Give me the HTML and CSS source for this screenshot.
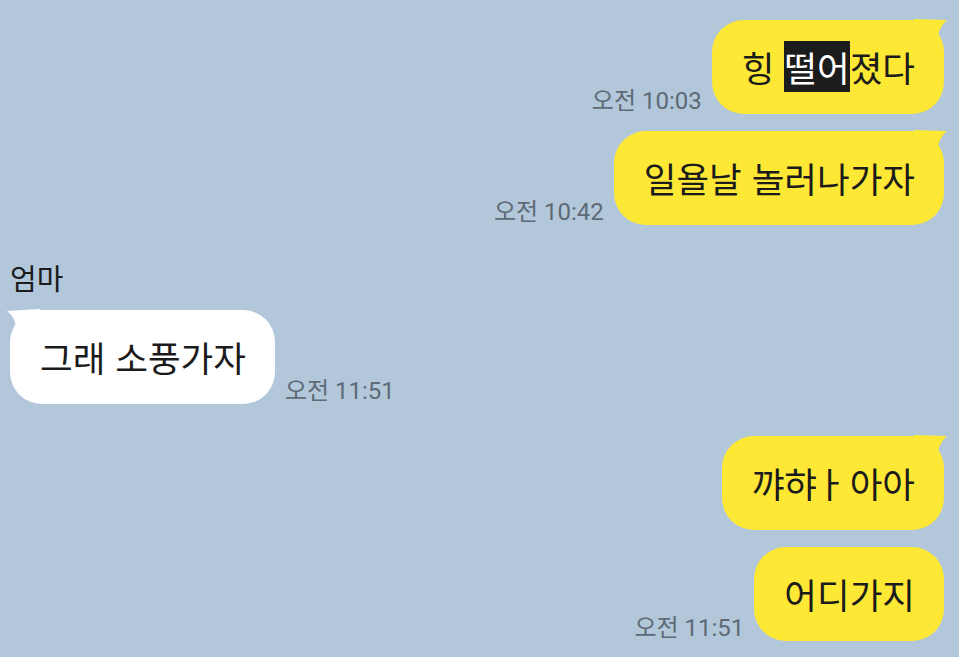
FILE: index.html
```html
<!DOCTYPE html>
<html lang="ko">
<head>
<meta charset="utf-8">
<link rel="stylesheet" href="styles.css">
</head>
<body>
<div class="chat">
  <div class="row me">
    <span class="time">오전 10:03</span>
    <div class="bubble yellow">힝 <span class="sel">떨어</span>졌다<svg class="tail tail-r" viewBox="0 0 36 26" width="36" height="26"><path d="M0 0 L33 1 Q24 8 22 26 L0 26 Z"/></svg></div>
  </div>
  <div class="row me gap-s">
    <span class="time">오전 10:42</span>
    <div class="bubble yellow">일욜날 놀러나가자<svg class="tail tail-r" viewBox="0 0 36 26" width="36" height="26"><path d="M0 0 L33 1 Q24 8 22 26 L0 26 Z"/></svg></div>
  </div>
  <div class="name">엄마</div>
  <div class="row other">
    <div class="bubble white">그래 소풍가자<svg class="tail tail-l" viewBox="0 0 36 26" width="36" height="26"><path d="M36 0 L3 2 Q12 8 14 26 L36 26 Z"/></svg></div>
    <span class="time">오전 11:51</span>
  </div>
  <div class="row me gap-l">
    <div class="bubble yellow">꺄<span class="tight">햐</span><span class="jamo">ㅏ</span> 아아<svg class="tail tail-r" viewBox="0 0 36 26" width="36" height="26"><path d="M0 0 L33 1 Q24 8 22 26 L0 26 Z"/></svg></div>
  </div>
  <div class="row me gap-s">
    <span class="time">오전 11:51</span>
    <div class="bubble yellow">어디가지</div>
  </div>
</div>
</body>
</html>
```
FILE: styles.css
```css
html, body {
  margin: 0;
  padding: 0;
  background: #b2c7da;
  height: 100%;
  overflow: hidden;
}
.chat {
  display: flex;
  flex-direction: column;
  padding: 20px 15px 0 10px;
  font-family: "Noto Sans CJK KR", "Noto Sans", sans-serif;
  color: #1b1b1b;
}
.row {
  display: flex;
  align-items: flex-end;
  gap: 10px;
}
.row.me { justify-content: flex-end; }
.row.other { justify-content: flex-start; }
.gap-s { margin-top: 17px; }
.gap-l { margin-top: 32px; }
.bubble {
  position: relative;
  font-size: 35.5px;
  line-height: 48px;
  padding: 23px 29px 23px 30px;
  border-radius: 32px;
  white-space: nowrap;
}
.yellow { background: #fee836; }
.white { background: #ffffff; }
.yellow .tail path { fill: #fee836; }
.white .tail path { fill: #ffffff; }
.tail {
  position: absolute;
  top: 0;
}
.tail-r { right: -6px; top: -1px; }
.tail-l { left: -6px; top: -1px; }
.sel {
  background: #1c1c1c;
  color: #ffffff;
}
.tight {
  letter-spacing: -0.08em;
}
.jamo {
  letter-spacing: -0.2em;
}
.time {
  font-family: Roboto, "Noto Sans CJK KR", sans-serif;
  font-size: 24px;
  line-height: 30px;
  color: #5e6a76;
  margin-bottom: -2px;
  white-space: nowrap;
}
.name {
  margin-top: 35px;
  font-size: 29px;
  line-height: 34px;
  margin-bottom: 16px;
  color: #1b1b1b;
}
```
